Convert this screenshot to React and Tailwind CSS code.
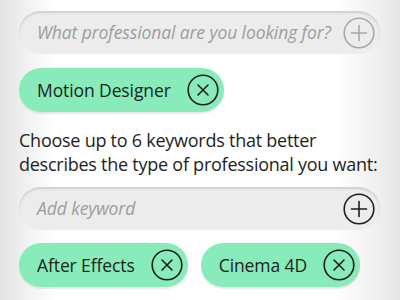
import React from 'react';

const font = { fontFamily: '"Open Sans", "Noto Sans", sans-serif' };

const CircleIcon = ({ type, color = '#1d1d1d', size = 32 }) => (
  <svg width={size} height={size} viewBox="0 0 32 32" fill="none" stroke={color} strokeWidth="1.6" strokeLinecap="round" className="shrink-0">
    <circle cx="16" cy="16" r="14.8" />
    {type === 'plus' ? (
      <path d="M16 8.5v15M8.5 16h15" />
    ) : (
      <path d="M11 11l10 10M21 11l-10 10" />
    )}
  </svg>
);

const SearchField = ({ placeholder, iconColor }) => (
  <div className="flex items-center justify-between h-[43px] w-[361px] rounded-full bg-[#ececec] pl-[18px] pr-[5px] shadow-[inset_0_2px_2px_rgba(0,0,0,0.12)]">
    <span className="italic text-[17.5px] text-[#9d9d9d] tracking-[-0.1px]">{placeholder}</span>
    <CircleIcon type="plus" color={iconColor} size={32} />
  </div>
);

const Chip = ({ label }) => (
  <div className="flex items-center gap-[16px] h-[44px] rounded-full bg-[#87ebba] pl-[18px] pr-[5px] shadow-[0_2px_1px_rgba(0,0,0,0.08)]">
    <span className="text-[17.5px] text-[#1c2420] tracking-[-0.1px]">{label}</span>
    <CircleIcon type="x" />
  </div>
);

export default function App() {
  return (
    <div
      className="w-[400px] h-[300px] overflow-hidden bg-[linear-gradient(to_right,#e4e4e4_0%,#ffffff_14%,#ffffff_84%,#e6e6e6_100%)] px-[19px] pt-[11px]"
      style={font}
    >
      <SearchField placeholder="What professional are you looking for?" iconColor="#a8a8a8" />
      <div className="flex mt-[14px]">
        <Chip label="Motion Designer" />
      </div>
      <p className="mt-[16px] text-[18px] leading-[24px] tracking-[-0.25px] text-[#1e1e1e]">
        Choose up to 6 keywords that better describes the type of professional you want:
      </p>
      <div className="mt-[11px]">
        <SearchField placeholder="Add keyword" iconColor="#1d1d1d" />
      </div>
      <div className="flex gap-[13px] mt-[13px]">
        <Chip label="After Effects" />
        <Chip label="Cinema 4D" />
      </div>
    </div>
  );
}
